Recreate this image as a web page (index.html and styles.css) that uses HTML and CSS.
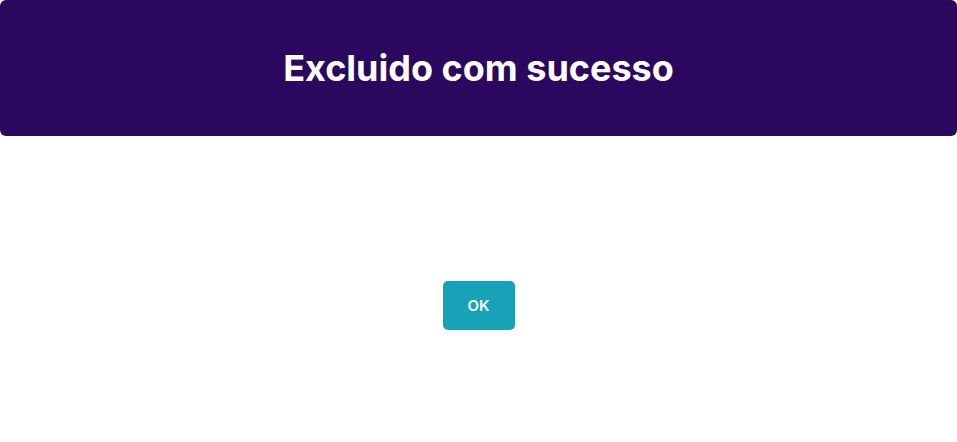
FILE: index.html
```html
<!DOCTYPE html>
<html lang="pt">
<head>
<meta charset="utf-8">
<link rel="stylesheet" href="styles.css">
</head>
<body>
<div class="modal">
  <header class="modal-header">
    <h1 class="modal-title">Excluido com sucesso</h1>
  </header>
  <div class="modal-body">
    <button class="btn-ok" type="button">OK</button>
  </div>
</div>
</body>
</html>
```
FILE: styles.css
```css
* { box-sizing: border-box; }
html, body { margin: 0; padding: 0; background: #fff; }
body { font-family: Inter, "Noto Sans", sans-serif; }
.modal { width: 957px; height: 442px; display: flex; flex-direction: column; }
.modal-header {
  height: 136px;
  background: #2b0760;
  border-radius: 6px;
  display: flex;
  align-items: center;
  justify-content: center;
}
.modal-title {
  margin: 0;
  color: #fff;
  font-size: 36px;
  font-weight: 700;
}
.modal-body {
  display: flex;
  justify-content: center;
  padding-top: 145px;
}
.btn-ok {
  width: 72px;
  height: 49px;
  border: none;
  border-radius: 5px;
  background: #17a2b8;
  color: #fff;
  font-family: Inter, sans-serif;
  font-size: 15px;
  font-weight: 600;
  padding: 0;
}
```
